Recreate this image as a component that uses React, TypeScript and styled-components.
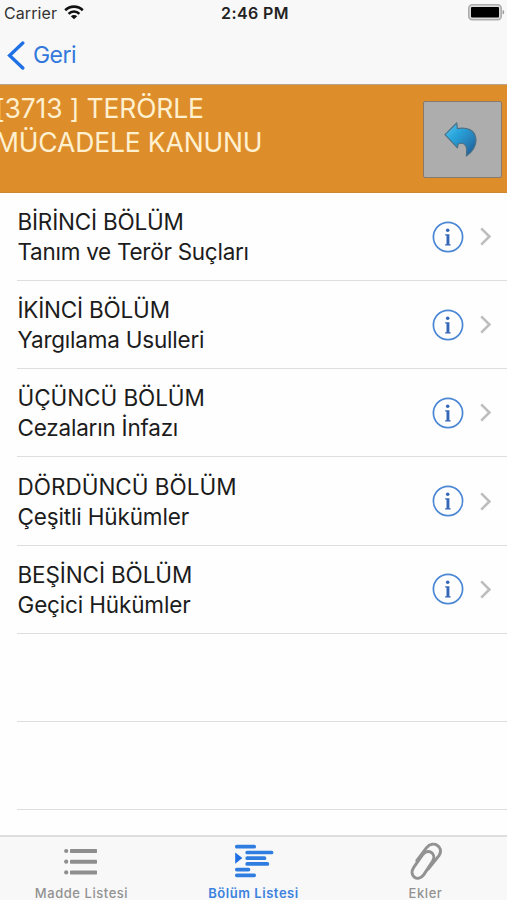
import React from 'react';
import styled, { createGlobalStyle } from 'styled-components';

const GlobalStyle = createGlobalStyle`
  *, *::before, *::after { box-sizing: border-box; }
  body { margin: 0; background: #fff; }
  button { font: inherit; color: inherit; background: none; border: 0; padding: 0; margin: 0; }
`;

const Screen = styled.div`
  width: 507px;
  height: 900px;
  overflow: hidden;
  display: flex;
  flex-direction: column;
  background: #fefefe;
  color: #1c1c1c;
  font-family: Inter, "Liberation Sans", sans-serif;
`;

const StatusBar = styled.div`
  height: 25px;
  flex: none;
  display: grid;
  grid-template-columns: 1fr auto 1fr;
  align-items: center;
  padding: 0 2px 0 4px;
  background: #f8f8f8;
`;

const Carrier = styled.div`
  display: flex;
  align-items: center;
  gap: 7px;
  font-size: 16px;
  line-height: 24px;
  letter-spacing: 0.1px;
  color: #333;
`;

const Clock = styled.div`
  padding-left: 1px;
  font-size: 16px;
  line-height: 24px;
  font-weight: 600;
  letter-spacing: 0.4px;
  color: #222;
`;

const BatterySlot = styled.div`
  display: flex;
  justify-content: flex-end;
`;

const NavBar = styled.nav`
  height: 60px;
  flex: none;
  display: flex;
  align-items: center;
  padding-left: 7px;
  background: #f8f8f8;
  border-bottom: 1px solid #b9a489;
`;

const BackButton = styled.button`
  display: flex;
  align-items: center;
  gap: 8px;
  padding-top: 1px;
  font-size: 23px;
  line-height: 30px;
  letter-spacing: -0.55px;
  color: #3478dc;
`;

const Banner = styled.header`
  height: 108px;
  flex: none;
  display: flex;
  justify-content: space-between;
  padding: 6px 5px 0 0;
  background: #de8d2b;
  border-bottom: 1px solid #d18730;
`;

const BannerTitle = styled.h1`
  margin: 0 0 0 -5px;
  font-size: 26.5px;
  line-height: 34px;
  font-weight: 400;
  letter-spacing: -0.15px;
  color: #fff0d0;
`;

const ReturnButton = styled.button`
  width: 79px;
  height: 77px;
  margin-top: 10px;
  padding-right: 4px;
  display: flex;
  align-items: center;
  justify-content: center;
  background: #adadad;
  border: 1.5px solid #887b6b;
  border-radius: 2px;
`;

const List = styled.ul`
  flex: 1;
  min-height: 0;
  overflow: hidden;
  margin: 0;
  padding: 0 0 0 17px;
  list-style: none;
`;

const Row = styled.li`
  height: 88.16px;
  display: flex;
  align-items: center;
  padding-right: 16.5px;
  border-bottom: 1px solid #dedede;
`;

const RowText = styled.div`
  flex: 1;
  padding: 1px 0 0 0.5px;
  font-size: 22.5px;
  line-height: 30px;
`;

const Line = styled.div<{ $spacing: number }>`
  white-space: nowrap;
  letter-spacing: ${(p) => p.$spacing}px;
`;

const InfoButton = styled.button`
  display: flex;
  margin-right: 16px;
`;

const TabBar = styled.nav`
  height: 65px;
  flex: none;
  display: grid;
  grid-template-columns: 163px 181px 163px;
  background: #f8f8f8;
  border-top: 2px solid #dedede;
`;

const Tab = styled.button<{ $active?: boolean }>`
  display: flex;
  flex-direction: column;
  align-items: center;
  padding-top: 4px;
  font-size: 13px;
  line-height: 16px;
  font-weight: ${(p) => (p.$active ? 600 : 500)};
  letter-spacing: 0.55px;
  color: ${(p) => (p.$active ? '#3c82df' : '#929292')};
`;

const TabIcon = styled.span`
  height: 44px;
  display: block;
`;

const WifiIcon = () => (
  <svg width="20" height="15" viewBox="0 0 20 15">
    <g fill="none" stroke="#111" strokeWidth="2.6">
      <path d="M1.2 5.3C6.2.4 13.8.4 18.8 5.3" />
      <path d="M4.6 8.8c3-3 7.8-3 10.8 0" />
    </g>
    <path d="M6.8 11.2c1.8-1.7 4.6-1.7 6.4 0L10 14.3Z" fill="#111" />
  </svg>
);

const BatteryIcon = () => (
  <svg width="37" height="17" viewBox="0 0 37 17">
    <rect x=".8" y=".8" width="32.4" height="15" rx="3.5" fill="#dcdcdc" stroke="#adadad" strokeWidth="1.6" />
    <rect x="3" y="3" width="28" height="10.5" rx="1" fill="#000" />
    <path d="M34.6 6v4.6c2.2-.5 2.2-4.1 0-4.6Z" fill="#999" />
  </svg>
);

const BackChevron = () => (
  <svg width="18" height="29" viewBox="0 0 18 29">
    <path d="M15.8 2 2.6 14.5 15.8 27" fill="none" stroke="#1f70e4" strokeWidth="3.3" strokeLinecap="round" />
  </svg>
);

const ReturnArrow = () => (
  <svg width="34" height="36" viewBox="0 0 34 36">
    <defs>
      <linearGradient id="arrow" x1="0" y1="0" x2="1" y2="1">
        <stop offset="0" stopColor="#65c9ee" />
        <stop offset=".35" stopColor="#27a4dc" />
        <stop offset=".7" stopColor="#287db5" />
        <stop offset="1" stopColor="#124f91" />
      </linearGradient>
    </defs>
    <path
      d="M1 12.6 12.7 1l.7 5.6C22 5.1 31.4 7 32 17.8c.3 6.2-4 12.7-9.7 16.2.7-4.8.9-9.8-1.8-11.8-1.8-1.3-4.7-.9-6.4-.2l-.7 3.8Z"
      fill="url(#arrow)"
      stroke="#4a7187"
      strokeWidth="1.2"
      strokeLinejoin="round"
    />
  </svg>
);

const InfoIcon = () => (
  <svg width="32" height="32" viewBox="0 0 32 32">
    <circle cx="16" cy="16" r="14.6" fill="none" stroke="#4b88d4" strokeWidth="1.7" />
    <circle cx="15.7" cy="9.3" r="1.8" fill="#3567b8" />
    <path d="M13.2 13.3h4.2v9.9h1.2v1.2h-5.5v-1.2h1.4v-8.6h-1.3Z" fill="#3567b8" />
  </svg>
);

const Disclosure = () => (
  <svg width="11" height="19" viewBox="0 0 11 19">
    <path d="M1.2 1.4 9.4 9.5 1.2 17.6" fill="none" stroke="#bdbdbd" strokeWidth="2.5" />
  </svg>
);

const BulletsIcon = () => (
  <svg width="40" height="42" viewBox="0 0 40 42">
    <g fill="#8e8e8e">
      {[10, 20.7, 31.4].map((y) => (
        <React.Fragment key={y}>
          <circle cx="4.2" cy={y} r="2.1" />
          <rect x="8" y={y - 2} width="27" height="4" rx=".7" />
        </React.Fragment>
      ))}
    </g>
  </svg>
);

const OutlineIcon = () => (
  <svg width="40" height="42" viewBox="0 0 40 42">
    <g stroke="#2f7de0" strokeWidth="3.7" strokeLinecap="round">
      <path d="M2.8 5.7h17.4M13.2 11.5h24.4M13.2 17.2h17.3M13.2 22.9h20.2M2.8 28.6h11.7M2.8 34.3h17.4" />
    </g>
    <path d="m1.2 11.5 7.2 5.6-7.2 5.6Z" fill="#1f70e4" />
  </svg>
);

const PaperclipIcon = () => (
  <svg width="40" height="42" viewBox="0 0 40 42">
    <g fill="none" stroke="#929292" strokeWidth="3" strokeLinecap="round" strokeLinejoin="round">
      <path d="M7.9 26.2 16.5 13.8C22 6.6 31.4 12.9 26.4 20.6L17.8 33.6C12.2 41.6 1.8 35 7.9 26.2Z" />
      <path d="M10.8 19.6 20.6 6.6C27.2-1.3 38.8 6 33 14.6L22.4 27.8" />
    </g>
  </svg>
);

const chapters = [
  { title: 'BİRİNCİ BÖLÜM', subtitle: 'Tanım ve Terör Suçları', titleSpacing: -0.2, subtitleSpacing: -0.27 },
  { title: 'İKİNCİ BÖLÜM', subtitle: 'Yargılama Usulleri', titleSpacing: -0.2, subtitleSpacing: -0.21 },
  { title: 'ÜÇÜNCÜ BÖLÜM', subtitle: 'Cezaların İnfazı', titleSpacing: -0.07, subtitleSpacing: -0.22 },
  { title: 'DÖRDÜNCÜ BÖLÜM', subtitle: 'Çeşitli Hükümler', titleSpacing: 0, subtitleSpacing: -0.15 },
  { title: 'BEŞİNCİ BÖLÜM', subtitle: 'Geçici Hükümler', titleSpacing: -0.12, subtitleSpacing: -0.15 },
];

export default function App() {
  return (
    <>
      <GlobalStyle />
      <Screen>
        <StatusBar>
          <Carrier>
            Carrier
            <WifiIcon />
          </Carrier>
          <Clock>2:46 PM</Clock>
          <BatterySlot>
            <BatteryIcon />
          </BatterySlot>
        </StatusBar>
        <NavBar>
          <BackButton>
            <BackChevron />
            Geri
          </BackButton>
        </NavBar>
        <Banner>
          <BannerTitle>
            [3713 ] TERÖRLE
            <br />
            MÜCADELE KANUNU
          </BannerTitle>
          <ReturnButton aria-label="Geri dön">
            <ReturnArrow />
          </ReturnButton>
        </Banner>
        <List>
          {chapters.map((c) => (
            <Row key={c.title}>
              <RowText>
                <Line $spacing={c.titleSpacing}>{c.title}</Line>
                <Line $spacing={c.subtitleSpacing}>{c.subtitle}</Line>
              </RowText>
              <InfoButton aria-label="Bilgi">
                <InfoIcon />
              </InfoButton>
              <Disclosure />
            </Row>
          ))}
          <Row />
          <Row />
        </List>
        <TabBar>
          <Tab>
            <TabIcon>
              <BulletsIcon />
            </TabIcon>
            Madde Listesi
          </Tab>
          <Tab $active>
            <TabIcon>
              <OutlineIcon />
            </TabIcon>
            Bölüm Listesi
          </Tab>
          <Tab>
            <TabIcon>
              <PaperclipIcon />
            </TabIcon>
            Ekler
          </Tab>
        </TabBar>
      </Screen>
    </>
  );
}
